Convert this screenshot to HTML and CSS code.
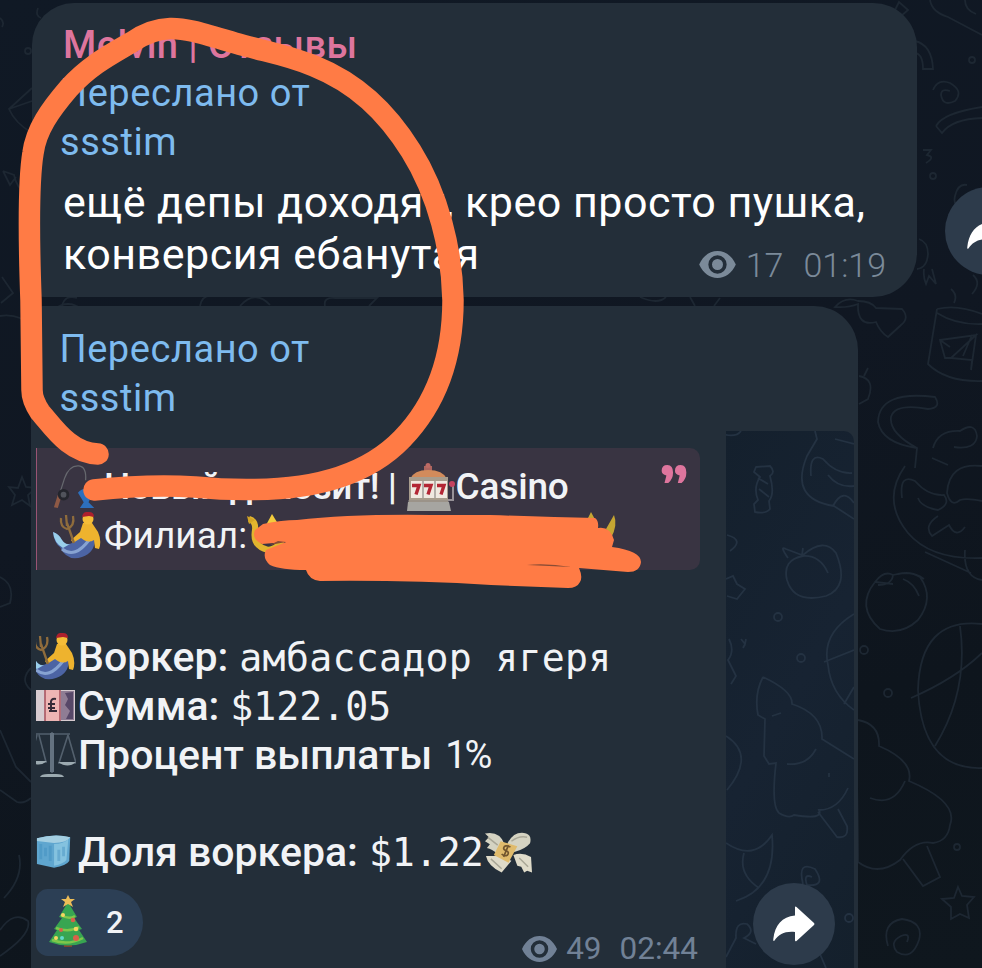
FILE: index.html
```html
<!DOCTYPE html>
<html lang="ru">
<head>
<meta charset="utf-8">
<title>Melvin | Отзывы</title>
<link rel="stylesheet" href="styles.css">
</head>
<body>
<svg class="defs" width="0" height="0" aria-hidden="true">
  <defs>
    <symbol id="eye" viewBox="0 0 38 28"><path fill-rule="evenodd" d="M0 14C4 5 11 0 19 0s15 5 19 14c-4 9-11 14-19 14S4 23 0 14ZM19 4.500a9.500 9.500 0 1 0 0 19a9.500 9.500 0 0 0 0-19Zm0 3.800a5.700 5.700 0 1 1 0 11.400a5.700 5.700 0 0 1 0-11.400Z" fill="currentColor"/></symbol>
    <symbol id="share" viewBox="0 0 42 36"><path d="M22 1.500Q22 0 23.500 1L41 17q1 1 0 2L23.500 35Q22 36 22 34V26C12 25 6 28 1.500 34.500Q0 36 .3 33C2 19 9 10.500 22 9.500Z" fill="#fff"/></symbol>
    <symbol id="merman" viewBox="0 0 48 48">
      <path d="M0 20q6 2 9 8q4 6 10 3l9-7q9-6 14 2q0 15-13 19Q14 50 7 35Q1 31 0 20Z" fill="#4c64a4"/>
      <path d="M0 20q6 2 9 8q3 5 8 4l-7 4Q1 31 0 20Z" fill="#9acfeb"/>
      <path d="M9 37q13 10 27-9" fill="none" stroke="#87a3d2" stroke-width="3"/>
      <path d="M30 11h9l6 9q4 9 1 17l-4-1l-1-8q-6 4-13-2l-8 5l-2-3l9-8Z" fill="#eeb32e"/>
      <circle cx="35" cy="7" r="5.500" fill="#f5bd38"/><path d="M29 5q1-6 7-5q5 0 5 5l-5-1Z" fill="#ad202d"/>
      <path d="M21 31L14 11M8 6q-1 9 6 11q8-3 6-13M14 14l-1-11" fill="none" stroke="#8f6c3c" stroke-width="2.300"/>
    </symbol>
    <symbol id="ice" viewBox="0 0 40 38"><path d="M1 4Q20-1 36 3l-1 25q-3 5-16 7L1 31Z" fill="#5fa6cf"/><path d="M1 4Q20-1 36 3q-4 6-17 6L1 7Z" fill="#a4cfe2"/><path d="M19 10q10 0 15-5l-2 22q-3 4-13 6Z" fill="#84c2df"/><path d="M5 10v16m5-12v9m5-11v16m9-12v12m5-15v10" stroke="#3c8bbd" stroke-width="3" opacity=".4"/></symbol>
    <symbol id="scales" viewBox="0 0 40 48"><path d="M0 3h34M16 1v41M1 4l-8 27h17L3 4M32 4l-9 28h17L32 4" fill="none" stroke="#53606d" stroke-width="1.600"/><path d="M16 2v39" stroke="#647280" stroke-width="4"/><path d="M-7 30h18q-8 7-18 0ZM22 31h18q-8 7-18 0ZM4 46q1-3 8-3h8q7 0 8 3Z" fill="#9caab0"/></symbol>
    <symbol id="note" viewBox="0 0 40 32"><path d="M0 0h39v31H0Z" fill="#d7cbd0"/><path d="M9 0h15v31H9Z" fill="#edb5b4"/><path d="M9 0v31M24 0v31" stroke="#a54f5b" stroke-width="1.500"/><path d="M25 1h13v29H25Z" fill="#8f7d94"/><path d="M29 3l3 6l-3 6l5 6l-4 8h7V2Z" fill="#574868"/><path d="M20 9q-6-1-5 5v7h-2h8M12 14h7M12 18h7" fill="none" stroke="#352b38" stroke-width="2"/></symbol>
    <symbol id="rod" viewBox="0 0 50 48"><path d="M3 43L12 15Q17 1 27 2q8 1 7 15" fill="none" stroke="#66686e" stroke-width="1.300"/><path d="M1 45l4-13 4 1-4 13Z" fill="#8e5945"/><circle cx="11" cy="32" r="6" fill="#24262d"/><circle cx="11" cy="32" r="3" fill="#50535b"/><path d="M26 30q8-9 14 3l-3 7 6 6H28l4-6Z" fill="#2d6fbd"/></symbol>
    <symbol id="slot" viewBox="0 0 48 50"><path d="M17 4h8v5H17Z" fill="#ad655f"/><circle cx="21" cy="3.500" r="2.500" fill="#bd6a64"/><path d="M3 17Q7 8 21 8q15 0 19 9Z" fill="#d28b5b"/><path d="M2 15h39v32H2Z" fill="#a89d8d"/><path d="M4 19h36v17H4Z" fill="#f0e9e0"/><path d="M1 40h41l2 9H0Z" fill="#a6a5a1"/><path d="M1 39h41M16 19v17M28 19v17" stroke="#8e8a85" stroke-width="1.200"/><path d="M5 23.500h7l-3 9M17 23.500h7l-3 9M30 23.500h7l-3 9" fill="none" stroke="#b32634" stroke-width="3.400"/><path d="M41 38h5V24" fill="none" stroke="#969197" stroke-width="2"/><circle cx="45" cy="22" r="3" fill="#c54360"/></symbol>
    <symbol id="winged" viewBox="0 0 50 44"><path d="M1 2q15-3 20 11L14 23Q8 18 3 17l3-4-5-3 4-4ZM24 12Q31-1 43 2q6 2 4 10q-5 6-16 9Z" fill="#d5d3c2"/><path d="M15 25l13 5-10 12Q4 35 2 25ZM30 24q9-3 18 2l1 16-5-2-3 2-3-6-4-1Z" fill="#dfdbc9"/><path d="M28 10q8-6 16-4M7 28l11 10M4 6l10 8M36 27l9 9" stroke="#a9a797" stroke-width="1.500" fill="none"/><path d="M17 10l17 5-9 17-15-8Z" fill="#e0bb6c"/><path d="M27 16q-6-3-7 1 0 2 3 3t1 4q-3 2-6-1M25 14l-5 12" fill="none" stroke="#71552e" stroke-width="1.700"/></symbol>
    <symbol id="tree" viewBox="0 0 40 54"><path d="M16 44h8v8h-8Z" fill="#80452e"/><path d="M20 7l9 15-3 1 8 11-3 1 8 12q-19 7-38 0l8-12-3-1 8-11-3-1Z" fill="#38a551"/><path d="M13 20q8 5 14 1M8 33q13 5 23-1M4 45q16 6 31-2" fill="none" stroke="#7fc74b" stroke-width="2.500"/><path d="M20 0l2 4h5l-4 3 2 5-5-3-5 3 2-5-4-3h5Z" fill="#edbd58"/><g fill="#d9614a"><circle cx="25" cy="25" r="2.300"/><circle cx="13" cy="35" r="2"/><circle cx="28" cy="43" r="3"/></g><g fill="#f7d661"><circle cx="15" cy="20" r="2"/><circle cx="28" cy="34" r="2.300"/><circle cx="8" cy="43" r="2"/></g><circle cx="14" cy="43" r="2" fill="#63d9cb"/></symbol>
    <g id="doodles">
      <path d="M38 8q-3 8 3 10M0 18q5 4 2 9M32 88L9 109q6 14 23 24M9 109l23-8M3 171l11 4q2 11 12 20M3 171l7 14 6-8M2 277l11 16-12 10M0 316q18-3 32 10M22 477l4 10 10 1-8 7 2 11-8-6-10 5 3-10-6-8 9 1ZM0 577q15 7 10 26l-10 4M31 668q-12 12 0 22M0 730l16 37 15 15M0 790l17 12q7 2 14-4M19 855q5 22-15 43M0 930q14-20 28-9 4 13-28 35"/>
      <circle cx="28" cy="51" r="3"/><circle cx="68" cy="322" r="18"/>
      <path d="M62 306q3-12 15-8M200 306q2-11 12-10M240 306q15-17 30-1M325 306q-2-9 10-8l42 0-8 8M640 297q18 8 26 0M690 297l5 9M720 298l-6 8"/>
      <path d="M893 14l6-12 9 8-8 7M930 0q2 12 18 17l34 18M965 0q0 10 11 14M915 41q17 4 18 28h-10q0-15-8-16M933 90q5-12 17-7 14 8 5 18-12 6-14-6 0-7 9-4M936 126q7-13 46-19M936 126l6 7q10-14 40-15M923 150h8l-4 5q9 2-1 8M919 239q9 3 9 15-1 14-11 15M924 269q-1 8 2 15l3-8 7 8-4-15M967 185q-9-2-12 11t11 9M951 289q7 6 3 14M973 275q9 8-1 19"/>
      <circle cx="972" cy="60" r="3"/><circle cx="933" cy="176" r="3"/>
      <path d="M835 307q10-11 23-6 13 0 18 7l26 1q8 9-1 16l-13 12q-8-5-12-15-19 5-18-18-10 4-23 3Z"/>
      <path d="M937 309q20-5 45 5M937 309l-9 55q18 18 54 17M937 313q19 12 45 11M940 340l36-5-25 23 21 2-1 10 5-35-25 23-6 0ZM940 340l10 7M963 356l9-21"/>
      <path d="M859 376q17 3 9 23l-9 5M864 376l4-8M917 448q-35-5-39-26 1-32 57-25 7 11-7 12-33-6-37 8-2 16 26 31l-2 20M933 448q5-18 27-17 15-10 17 5-1 14-23 11M905 466q-24 34 3 67 23 27 74 25M902 498q-3-25 13-17 13 15 29 14 7 9-6 15-17-3-20-12M932 458l16 7M938 516q-15 10-6 20l17-11q7 14 16 2M982 466q-33-4-35 27 4 15 13 7 7-2 22 1M925 552l46 21M965 550q-2 27 17 30"/>
      <path d="M878 585q14 0 15-10m0 0q19-5 31 4M893 575q-9-5-18 7l18 2M875 582q-20 25 5 47 21 7 38-9 17-22 2-43-9-6-22-3m5 5q11 4 16 17"/>
      <path d="M982 624q-62-7-64 66 4 80 64 78M911 698q44-19 71-45M960 626q9 65-25 120"/>
      <path d="M858 720q22 4 21 26 35 15 30 35 50 21 41 44-2 16-17 18-18-4-33 17-22 17-42 2 0-17-1-81M870 798q24 9 35-17M903 859l20 27 17-9-13-31M958 887l4 9 12 1-7 8 2 13-9-4-9 5v-12l-9-8 12-1ZM888 946q-7-23 14-27 22 3 17 21-7 21-22 12-8-10 4-16 10-4 6 6"/>
      <circle cx="864" cy="650" r="4"/><circle cx="888" cy="693" r="4"/><circle cx="957" cy="847" r="3"/>
    </g>
  </defs>
</svg>

<main class="chat">
  <svg class="wallpaper" viewBox="0 0 982 968" aria-hidden="true"><use href="#doodles"/></svg>

  <article class="message first">
    <div class="author">Melvin | Отзывы</div>
    <div class="forward">Переслано от</div>
    <div class="forward user">ssstim</div>
    <div class="body">
      <p class="line-a">ещё депы доходят, крео просто пушка,</p>
      <div class="last-line">
        <p class="line-b">конверсия ебанутая</p>
        <div class="meta"><svg class="eye"><use href="#eye"/></svg><span class="views">17</span><time>01:19</time></div>
      </div>
    </div>
    <button class="share outer-share" aria-label="Переслать"><svg><use href="#share"/></svg></button>
  </article>

  <article class="message second">
    <div class="forward">Переслано от</div>
    <div class="forward user">ssstim</div>
    <div class="photo">
      <div class="receipt">
        <div class="quote">
          <div class="row"><svg class="icon"><use href="#rod"/></svg><b class="t-new">Новый депозит! |</b><svg class="slot"><use href="#slot"/></svg><b class="t-casino">Casino</b></div>
          <div class="row"><svg class="icon"><use href="#merman"/></svg><span class="t-branch">Филиал:</span>
            <svg class="emblem" viewBox="0 0 60 48"><path d="M2 7q7 2 6 11-3 16 13 20 16-2 18-26" fill="none" stroke="#e2b52e" stroke-width="6"/><path d="M18 15l7-13 8 13Z" fill="#f3cc3c"/><path d="M0 4l8 4-6 4Z" fill="#d3a526"/></svg>
          </div>
          <svg class="marks" viewBox="0 0 26 20"><path id="comma" d="M6 0q6 0 6 8 0 7-5 11H3l2-8Q0 10 0 6q0-6 6-6Z" fill="#de759d"/><use href="#comma" x="14"/></svg>
        </div>
        <div class="details">
          <div class="row"><svg class="icon cut"><use href="#merman" x="-9" width="48" height="48"/></svg><b class="t-worker">Воркер:</b><code class="v-worker">амбассадор ягеря</code></div>
          <div class="row"><svg class="icon note"><use href="#note"/></svg><b class="t-sum">Сумма:</b><code class="v-sum">$122.05</code></div>
          <div class="row"><svg class="icon scales"><use href="#scales"/></svg><b class="t-percent">Процент выплаты</b><span class="v-percent">1%</span></div>
          <div class="row total"><svg class="icon ice"><use href="#ice"/></svg><b class="t-share">Доля воркера:</b><code class="v-share">$1.22</code><svg class="winged"><use href="#winged"/></svg></div>
        </div>
        <div class="receipt-footer">
          <div class="reaction"><svg><use href="#tree"/></svg><span>2</span></div>
          <div class="meta"><svg class="eye"><use href="#eye"/></svg><span class="views">49</span><time>02:44</time></div>
        </div>
      </div>
      <div class="side">
        <svg class="side-art" viewBox="726 431 128 537" aria-hidden="true">
          <path d="M722 434q14 4 19-3M815 431l2 8-10 17q-18 43 27 50l20 13M811 476q-2-24 12-17 13 15 29 14M835 439l19 5M828 475q10 13 26 11M833 506q10-19 21-3M756 467l14-1q6 6 0 10 5 18-1 25l1 8q-4 5-15 3l-1-8 4-4q-5-12 2-23l-6-5ZM758 478l10 6M759 489l10 8M727 535q18 5 3 16M726 579l7-3 4 8 8 5-8 10-10-3M788 558q-9-13-2-9l16 6 1-7m0 7q21-18 33-2 14 34-10 43-32 8-39-16-5-20 16-24 17-1 25 17M854 614q-33 20-26 51 3 29 26 45M824 662l30-12M844 704l10-17M741 639l4 5 1-5m-1 5-2 4M729 639q6 12-1 21l8 16-5 8"/>
          <path d="M763 677q30 14 29 27 31 10 30 35l32 20M763 677q-9 17-5 38l7 4-1 37 5 8 7-1q-5 43 3 50 10 6 15 2 30 5 25-5 19 0 29-22M772 716l9-3M787 764q20 2 29-15M818 812l19 25q12 2 10-11l-9-17M829 773v4M726 736q30 19 1 54M726 843q28 19 46-8 5 53-36 66M744 853q-6 21 15 35M803 884q-6-24 12-15 12 18-8 16-4-12 5-8M726 957l10-19q-1-17 11-14 9 8-3 14l12 6M820 954l6 14"/>
          <circle cx="778" cy="617" r="4"/><circle cx="801" cy="658" r="4"/><circle cx="849" cy="918" r="4"/>
        </svg>
        <button class="share" aria-label="Переслать"><svg><use href="#share"/></svg></button>
      </div>
    </div>
  </article>

  <svg class="marker" viewBox="0 0 982 968" aria-hidden="true">
    <path class="stroke" d="M98 454C70 453 54 428 40 412Q32 400 32 390L31 300Q27 190 33 153C36 130 50 110 69 88C90 65 110 55 132 42Q151 29 170 28.500C186 28 204 34 235 43S285 54 314 66C356 83 386 111 411 151C438 194 452 250 453 300C453 356 437 403 402 439C370 472 322 489 255 489.500Q225 490 195 487Q150 484 94 490"/>
    <path fill="#c6a632" d="M586 522l5-10 7 13ZM606 529l8-14q4 10-3 23Z"/>
    <path class="scribble" d="M263 524Q282 520 297 520Q350 514 430 515H490Q550 517 595 518Q599 521 598 528Q610 526 614 540L612 547Q641 551 641 562Q640 572 628 572L579 568Q583 577 580 582Q577 588 568 588L491 585Q410 580 320 581Q309 580 306 570Q281 570 270 565Q262 558 266 550L286 542L262 544Q251 539 255 530Z"/>
    <path d="M270 545l16-3-8-1ZM527 565q20-2 44 2Z" fill="#8a4c35"/>
  </svg>
</main>
</body>
</html>
```
FILE: styles.css
```css
* { box-sizing: border-box; }
body {
  margin: 0;
  background: #0f1721;
  font-family: Roboto, "Noto Sans", sans-serif;
  color: #fff;
}
p { margin: 0; }
b { font-weight: 500; }
button { padding: 0; border: 0; font: inherit; }
.defs { position: absolute; }

.chat {
  position: relative;
  width: 982px;
  height: 968px;
  padding-top: 3px;
  overflow: hidden;
  background: linear-gradient(165deg, #101925 0%, #101722 45%, #0e151d 75%, #0f171e 100%);
}
.wallpaper, .marker { position: absolute; inset: 0; width: 982px; height: 968px; }
.wallpaper { fill: none; stroke: #1d2732; stroke-width: 1.8; }
.marker { pointer-events: none; }
.stroke { fill: none; stroke: #ff7b45; stroke-width: 21.5; stroke-linecap: round; stroke-linejoin: round; }
.scribble { fill: #ff7b45; }

.message { position: relative; background: #232e39; white-space: nowrap; }
.first {
  width: 885px;
  height: 294px;
  margin-left: 32px;
  padding: 17.5px 31px 0 32px;
  border-radius: 42px 44px 44px 12px;
}
.second {
  width: 827px;
  height: 662px;
  margin: 9px 0 0 31px;
  padding: 19px 4px 0 5px;
  border-radius: 12px 44px 0 0;
}

.author { height: 48px; margin-left: -1px; font-size: 38px; font-weight: 500; line-height: 49px; letter-spacing: .4px; color: #de759d; }
.forward { height: 49px; margin-left: -4px; font-size: 38px; line-height: 49px; letter-spacing: .55px; color: #7ebbef; }
.second .forward { margin-left: 23.5px; }

.body { margin: 9px 0 0 -1px; font-size: 43px; line-height: 52px; letter-spacing: .5px; }
.last-line { display: flex; justify-content: space-between; height: 52px; }
.meta {
  display: flex;
  align-items: center;
  height: 40px;
  font-size: 34px;
  font-weight: 300;
  line-height: 40px;
  letter-spacing: 0;
  color: #7b8a99;
}
.first .meta { margin-top: 17px; }
.eye { width: 37px; height: 27px; }
.views { margin-left: 10px; }
.meta time { margin-left: 20px; }

.share {
  display: grid;
  place-items: center;
  width: 82px;
  height: 82px;
  border-radius: 50%;
  background: #2d3b4b;
}
.share svg { width: 42px; height: 36px; }
.outer-share { position: absolute; left: 913px; top: 184px; width: 88px; height: 88px; }
.outer-share svg { width: 44px; height: 38px; }

.photo {
  display: grid;
  grid-template: 537px / 690px 128px;
  height: 537px;
  margin-top: 8px;
  overflow: hidden;
}
.receipt { display: flex; flex-direction: column; padding-top: 17px; color: #f1f3f6; }
.quote {
  position: relative;
  width: 664px;
  height: 122px;
  padding: 15px 0 0 16px;
  border-left: 1.500px solid #995474;
  border-radius: 0 10px 10px 0;
  background: #393442;
}
.marks { position: absolute; right: 13px; top: 17px; width: 26px; height: 19px; }
.row { display: flex; align-items: center; height: 48.8px; font-size: 41px; line-height: 48.8px; }
.quote .row { font-size: 37px; }
.quote .icon { width: 48px; height: 48px; margin-right: 3px; }
.t-new { letter-spacing: -.45px; }
.t-casino { margin-left: 1px; letter-spacing: -.2px; }
.slot { width: 48px; height: 50px; margin-left: 10px; }
.emblem { width: 60px; height: 48px; }
.details { margin-top: 63px; }
.details .icon { flex: none; width: 42px; height: 48px; }
.cut { overflow: hidden; }
.details .note { width: 40px; height: 32px; margin-right: 2px; }
.details .scales { width: 40px; margin-right: 2px; }
.details .ice { width: 38px; height: 37px; margin-right: 4px; }
.total { margin-top: 48.8px; }
code { position: relative; top: 1px; font: 38.2px/48.8px "DejaVu Sans Mono", monospace; margin-left: 11px; }
.v-worker { letter-spacing: .27px; }
.v-percent { margin-left: 13px; font-size: 38px; letter-spacing: -2px; }
.winged { width: 49px; height: 44px; }

.receipt-footer { display: flex; justify-content: space-between; margin-top: 12px; padding-right: 28px; }
.reaction {
  display: flex;
  align-items: center;
  width: 107px;
  height: 67px;
  padding-left: 12px;
  border-radius: 12px 34px 34px 12px;
  background: #2c3f55;
  font-size: 31px;
  font-weight: 500;
}
.reaction svg { width: 40px; height: 54px; margin-right: 18px; }
.receipt .meta { height: 34px; margin-top: 43px; font-size: 31.5px; font-weight: 400; line-height: 34px; color: #718196; }
.receipt .eye { width: 35px; height: 26px; }
.receipt .views { margin-left: 9px; }
.receipt time { margin-left: 18px; }

.side {
  position: relative;
  display: flex;
  align-items: flex-end;
  padding: 0 0 3px 27px;
  border-top-right-radius: 10px;
  overflow: hidden;
  background: linear-gradient(120deg, #14202d, #172332 50%, #14202c);
}
.side-art { position: absolute; inset: 0; width: 128px; height: 537px; fill: none; stroke: #243242; stroke-width: 1.8; }
.side .share { position: relative; }
```
